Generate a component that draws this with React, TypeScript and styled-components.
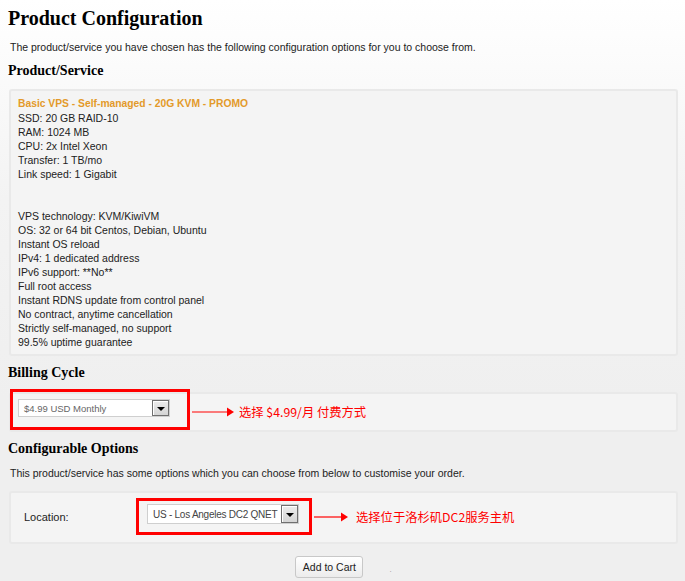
import React from "react";
import styled, { createGlobalStyle } from "styled-components";

const GlobalStyle = createGlobalStyle`
  html, body {
    margin: 0;
    padding: 0;
  }
  body {
    background: linear-gradient(to bottom, #ffffff 0px, #f3f3f3 200px, #efefef 400px) no-repeat, #efefef;
    min-height: 581px;
    font-family: "Liberation Sans", Arial, sans-serif;
    color: #222;
  }
`;

const Page = styled.div`
  padding: 6px 7px 4px 9px;
  display: flex;
  flex-direction: column;
`;

const Title = styled.h1`
  margin: 0 0 0 -1px;
  font-family: "Liberation Serif", "Times New Roman", serif;
  font-weight: bold;
  font-size: 20px;
  line-height: 24px;
  color: #000;
`;

const Intro = styled.p`
  margin: 10px 0 0 1px;
  font-size: 10.5px;
  line-height: 14px;
  color: #222;
`;

const SectionTitle = styled.h2<{ $gap: number }>`
  margin: ${(p) => p.$gap}px 0 0 -1px;
  font-family: "Liberation Serif", "Times New Roman", serif;
  font-weight: bold;
  font-size: 14px;
  line-height: 18px;
  color: #000;
`;

const Panel = styled.div<{ $gap: number }>`
  margin-top: ${(p) => p.$gap}px;
  background: #f4f4f4;
  border: 2px solid #e9e9e9;
  border-radius: 3px;
`;

const ProductPanel = styled(Panel)`
  padding: 6px 7px 5px 7px;
  font-size: 10.5px;
  line-height: 14px;
  color: #222;
`;

const ProductName = styled.div`
  color: #e39a2a;
  font-weight: bold;
  font-size: 10.3px;
`;

const Line = styled.div`
  min-height: 14px;
`;

const BillingPanel = styled(Panel)`
  display: flex;
  align-items: center;
  height: 36px;
`;

const RedBox = styled.div<{ $pad: string; $mt: number; $ml: number }>`
  box-sizing: border-box;
  border: 3px solid #ff0000;
  padding: ${(p) => p.$pad};
  margin-top: ${(p) => p.$mt}px;
  margin-left: ${(p) => p.$ml}px;
  align-self: flex-start;
  display: flex;
  flex: none;
`;

const SelectBox = styled.div<{ $w: number; $h: number; $fs: number; $ls: number; $color: string }>`
  box-sizing: border-box;
  width: ${(p) => p.$w}px;
  height: ${(p) => p.$h}px;
  background: #fff;
  border: 1px solid #cfcfcf;
  display: flex;
  align-items: center;
  justify-content: space-between;
  padding-left: 5px;
  font-size: ${(p) => p.$fs}px;
  letter-spacing: ${(p) => p.$ls}px;
  color: ${(p) => p.$color};
  white-space: nowrap;
  overflow: hidden;
`;

const DropButton = styled.div<{ $h: number }>`
  box-sizing: border-box;
  flex: none;
  width: 17px;
  height: ${(p) => p.$h}px;
  border: 1px solid #6f6f6f;
  background: linear-gradient(#ececec, #d4d4d4);
  box-shadow: inset 1px 1px 0 #fff;
  display: flex;
  align-items: center;
  justify-content: center;
`;

const Triangle = styled.span`
  width: 0;
  height: 0;
  border-left: 4px solid transparent;
  border-right: 4px solid transparent;
  border-top: 4px solid #000;
  margin-top: 1px;
`;

const Note = styled.div<{ $gap: number }>`
  display: flex;
  align-items: center;
  gap: ${(p) => p.$gap}px;
  color: #ff0000;
  font-family: "Noto Sans CJK SC", "Liberation Sans", sans-serif;
  font-size: 12.3px;
  line-height: 16px;
  margin-left: 2px;
  white-space: nowrap;
`;

const ArrowSvg = styled.svg`
  display: block;
  flex: none;
`;

const OptionsIntro = styled(Intro)`
  margin-top: 8px;
`;

const OptionsPanel = styled(Panel)`
  display: grid;
  grid-template-columns: 125px auto;
  align-items: center;
  padding: 5px 0 7px 0;
`;

const OptionLabel = styled.div`
  padding-left: 13px;
  font-size: 11px;
  color: #222;
`;

const OptionField = styled.div`
  display: flex;
  align-items: center;
`;

const Actions = styled.div`
  margin-top: 12px;
  display: flex;
  justify-content: center;
  align-items: flex-end;
  gap: 26px;
`;

const CartButton = styled.button`
  box-sizing: border-box;
  width: 68px;
  height: 22px;
  border: 1px solid #c8c8c8;
  border-radius: 3px;
  background: linear-gradient(#ffffff, #ececec);
  font-family: "Liberation Sans", Arial, sans-serif;
  font-size: 10.5px;
  color: #222;
  padding: 0;
  cursor: pointer;
`;

const Dot = styled.span`
  font-size: 8px;
  line-height: 8px;
  color: #999;
  margin-bottom: 4px;
`;

function Arrow({ width }: { width: number }) {
  return (
    <ArrowSvg width={width} height={10} viewBox={`0 0 ${width} 10`}>
      <line x1={0} y1={5} x2={width - 6} y2={5} stroke="#ff0000" strokeWidth={1.2} />
      <polygon points={`${width - 7},0.5 ${width},5 ${width - 7},9.5`} fill="#ff0000" />
    </ArrowSvg>
  );
}

type SelectProps = { w: number; h: number; fs: number; ls: number; color: string; text: string };

function Select({ w, h, fs, ls, color, text }: SelectProps) {
  return (
    <SelectBox $w={w} $h={h} $fs={fs} $ls={ls} $color={color}>
      <span>{text}</span>
      <DropButton $h={h - 2}>
        <Triangle />
      </DropButton>
    </SelectBox>
  );
}

const features = [
  "SSD: 20 GB RAID-10",
  "RAM: 1024 MB",
  "CPU: 2x Intel Xeon",
  "Transfer: 1 TB/mo",
  "Link speed: 1 Gigabit",
  "",
  "",
  "VPS technology: KVM/KiwiVM",
  "OS: 32 or 64 bit Centos, Debian, Ubuntu",
  "Instant OS reload",
  "IPv4: 1 dedicated address",
  "IPv6 support: **No**",
  "Full root access",
  "Instant RDNS update from control panel",
  "No contract, anytime cancellation",
  "Strictly self-managed, no support",
  "99.5% uptime guarantee",
];

export default function App() {
  return (
    <>
      <GlobalStyle />
      <Page>
        <Title>Product Configuration</Title>
        <Intro>
          The product/service you have chosen has the following configuration options for you to choose from.
        </Intro>
        <SectionTitle $gap={8}>Product/Service</SectionTitle>
        <ProductPanel $gap={9}>
          <ProductName>Basic VPS - Self-managed - 20G KVM - PROMO</ProductName>
          {features.map((f, i) => (
            <Line key={i}>{f}</Line>
          ))}
        </ProductPanel>

        <SectionTitle $gap={8}>Billing Cycle</SectionTitle>
        <BillingPanel $gap={10}>
          <RedBox $pad="7px 17px 10px 5px" $mt={-5} $ml={-1}>
            <Select w={152} h={18} fs={9.5} ls={0} color="#666" text="$4.99 USD Monthly" />
          </RedBox>
          <Note $gap={5}>
            <Arrow width={42} />
            <span>选择 $4.99/月 付费方式</span>
          </Note>
        </BillingPanel>

        <SectionTitle $gap={8}>Configurable Options</SectionTitle>
        <OptionsIntro>
          This product/service has some options which you can choose from below to customise your order.
        </OptionsIntro>
        <OptionsPanel $gap={11}>
          <OptionLabel>Location:</OptionLabel>
          <OptionField>
            <RedBox $pad="3px 10px 8px 8px" $mt={0} $ml={0}>
              <Select w={152} h={20} fs={10} ls={-0.25} color="#444" text="US - Los Angeles DC2 QNET" />
            </RedBox>
            <Note $gap={8}>
              <Arrow width={34} />
              <span>选择位于洛杉矶DC2服务主机</span>
            </Note>
          </OptionField>
        </OptionsPanel>

        <Actions>
          <CartButton type="button">Add to Cart</CartButton>
          <Dot>.</Dot>
        </Actions>
      </Page>
    </>
  );
}
